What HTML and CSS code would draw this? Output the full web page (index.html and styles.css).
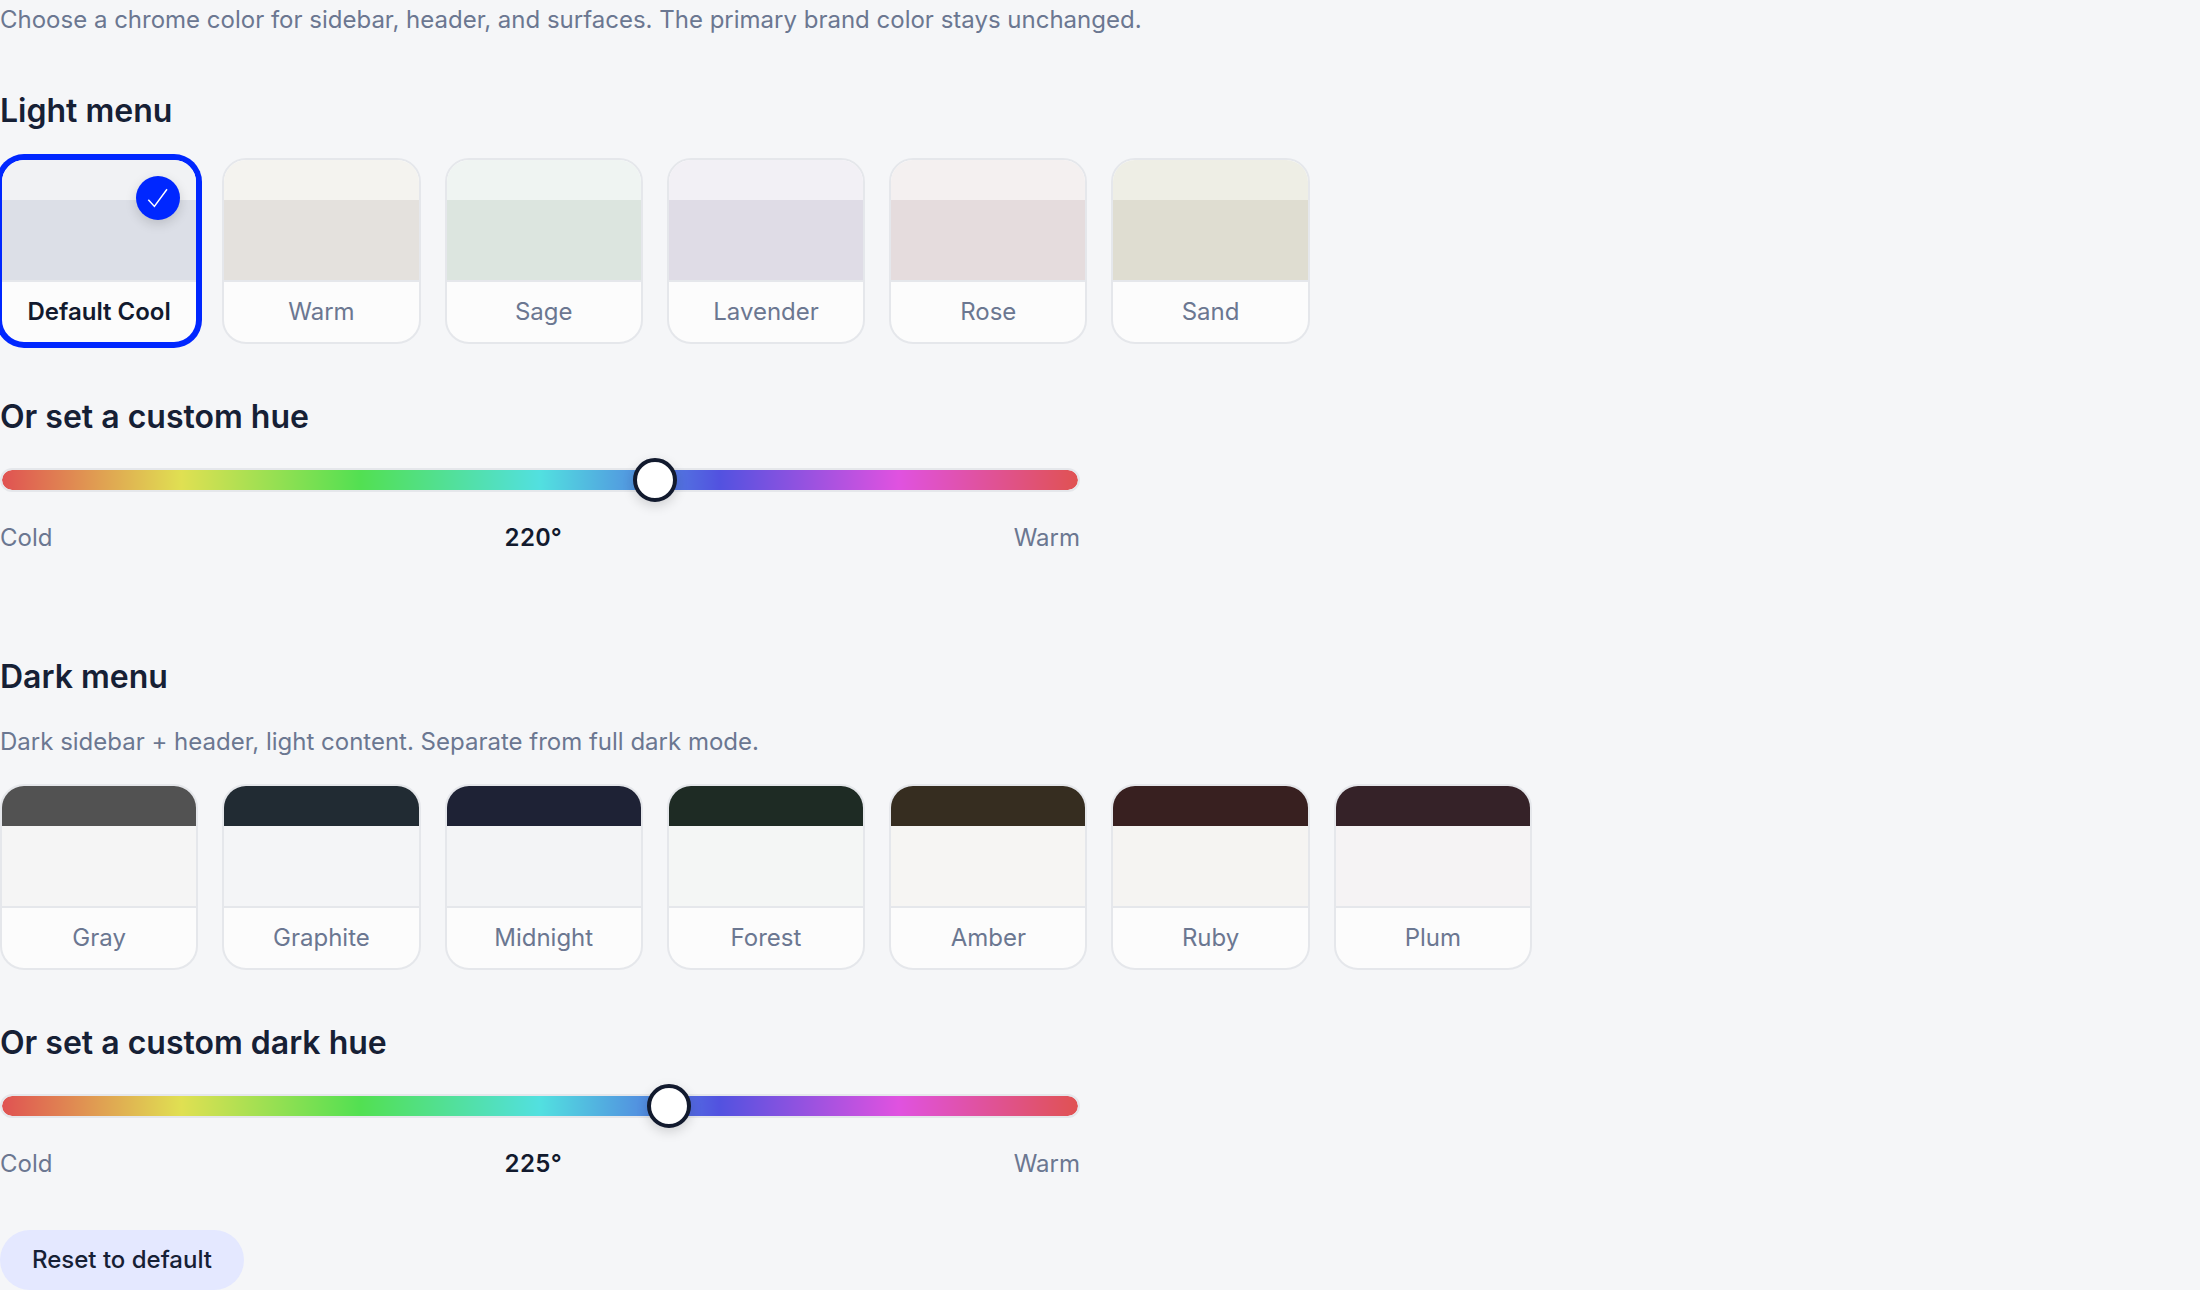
FILE: index.html
```html
<!DOCTYPE html>
<html lang="en">
<head>
    <meta charset="UTF-8">
    <meta name="viewport" content="width=device-width, initial-scale=1.0">
    <title>Chrome color</title>
    <link rel="stylesheet" href="styles.css">
</head>
<body>

    <form class="settings">
        <p class="hint">Choose a chrome color for sidebar, header, and surfaces. The primary brand color stays unchanged.</p>

        <!-- Light presets -->
        <h2>Light menu</h2>
        <div class="swatches">
            <label class="swatch cool">
                <input type="radio" name="chrome" value="cool" checked>
                <span class="swatch-header"></span>
                <span class="swatch-body"></span>
                <span class="swatch-name">Default Cool</span>
                <span class="check">
                    <svg viewBox="0 0 44 44" aria-hidden="true"><path d="M12.3 23.8 18.4 30.4 31 13.2"/></svg>
                </span>
            </label>
            <label class="swatch warm">
                <input type="radio" name="chrome" value="warm">
                <span class="swatch-header"></span>
                <span class="swatch-body"></span>
                <span class="swatch-name">Warm</span>
            </label>
            <label class="swatch sage">
                <input type="radio" name="chrome" value="sage">
                <span class="swatch-header"></span>
                <span class="swatch-body"></span>
                <span class="swatch-name">Sage</span>
            </label>
            <label class="swatch lavender">
                <input type="radio" name="chrome" value="lavender">
                <span class="swatch-header"></span>
                <span class="swatch-body"></span>
                <span class="swatch-name">Lavender</span>
            </label>
            <label class="swatch rose">
                <input type="radio" name="chrome" value="rose">
                <span class="swatch-header"></span>
                <span class="swatch-body"></span>
                <span class="swatch-name">Rose</span>
            </label>
            <label class="swatch sand">
                <input type="radio" name="chrome" value="sand">
                <span class="swatch-header"></span>
                <span class="swatch-body"></span>
                <span class="swatch-name">Sand</span>
            </label>
        </div>

        <h2><label for="lightHue">Or set a custom hue</label></h2>
        <div class="hue">
            <input type="range" id="lightHue" min="0" max="360" value="220" oninput="showHue(this, 'lightValue')">
            <div class="hue-scale">
                <span>Cold</span>
                <output id="lightValue" for="lightHue">220°</output>
                <span>Warm</span>
            </div>
        </div>

        <!-- Dark presets -->
        <div class="dark-section">
            <h2>Dark menu</h2>
            <p class="hint">Dark sidebar + header, light content. Separate from full dark mode.</p>
            <div class="swatches">
                <label class="swatch gray">
                    <input type="radio" name="chrome" value="gray">
                    <span class="swatch-header"></span>
                    <span class="swatch-body"></span>
                    <span class="swatch-name">Gray</span>
                </label>
                <label class="swatch graphite">
                    <input type="radio" name="chrome" value="graphite">
                    <span class="swatch-header"></span>
                    <span class="swatch-body"></span>
                    <span class="swatch-name">Graphite</span>
                </label>
                <label class="swatch midnight">
                    <input type="radio" name="chrome" value="midnight">
                    <span class="swatch-header"></span>
                    <span class="swatch-body"></span>
                    <span class="swatch-name">Midnight</span>
                </label>
                <label class="swatch forest">
                    <input type="radio" name="chrome" value="forest">
                    <span class="swatch-header"></span>
                    <span class="swatch-body"></span>
                    <span class="swatch-name">Forest</span>
                </label>
                <label class="swatch amber">
                    <input type="radio" name="chrome" value="amber">
                    <span class="swatch-header"></span>
                    <span class="swatch-body"></span>
                    <span class="swatch-name">Amber</span>
                </label>
                <label class="swatch ruby">
                    <input type="radio" name="chrome" value="ruby">
                    <span class="swatch-header"></span>
                    <span class="swatch-body"></span>
                    <span class="swatch-name">Ruby</span>
                </label>
                <label class="swatch plum">
                    <input type="radio" name="chrome" value="plum">
                    <span class="swatch-header"></span>
                    <span class="swatch-body"></span>
                    <span class="swatch-name">Plum</span>
                </label>
            </div>
        </div>

        <h2><label for="darkHue">Or set a custom dark hue</label></h2>
        <div class="hue">
            <input type="range" id="darkHue" min="0" max="360" value="225" oninput="showHue(this, 'darkValue')">
            <div class="hue-scale">
                <span>Cold</span>
                <output id="darkValue" for="darkHue">225°</output>
                <span>Warm</span>
            </div>
        </div>

        <button type="reset" class="reset">Reset to default</button>
    </form>

    <script>
        // Keep the degree readout in step with its slider
        function showHue(slider, outputId) {
            document.getElementById(outputId).textContent = slider.value + '°';
        }
    </script>

</body>
</html>
```
FILE: styles.css
```css
* {
    margin: 0;
    padding: 0;
    box-sizing: border-box;
}

body {
    font-family: Inter, 'Liberation Sans', sans-serif;
    font-size: 24px;
    line-height: 38px;
    color: #6b7791;
    background-color: #f5f6f8;
}

.settings {
    display: flex;
    flex-direction: column;
    padding-top: 1px;
}

h2 {
    margin-top: 52px;
    font-size: 32px;
    line-height: 40px;
    font-weight: 600;
    color: #162035;
}

/* Preset swatches */
.swatches {
    display: grid;
    grid-template-columns: repeat(7, 1fr);
    gap: 24px;
    max-width: 1532px;
    margin: 27px 0 1px;
}

.swatch {
    position: relative;
    display: flex;
    flex-direction: column;
    border: 2px solid #e5e7eb;
    border-radius: 24px;
    background-color: #fcfcfc;
    overflow: hidden;
    cursor: pointer;
}

.swatch input {
    position: absolute;
    opacity: 0;
}

.swatch-header {
    height: 40px;
}

.swatch-body {
    height: 80px;
}

.swatch-name {
    padding: 11px 8px;
    border-top: 2px solid #e5e7eb;
    text-align: center;
}

.swatch:has(input:checked) {
    border-color: #0027ff;
    box-shadow: 0 0 0 4px #0027ff;
}

.swatch:has(input:checked) .swatch-name {
    font-weight: 600;
    color: #121a2e;
}

.check {
    position: absolute;
    top: 16px;
    right: 16px;
    width: 44px;
    height: 44px;
    border-radius: 50%;
    background-color: #0027ff;
    box-shadow: 0 4px 12px rgba(0, 0, 0, 0.15);
}

.swatch input:not(:checked) ~ .check {
    display: none;
}

.check svg {
    display: block;
    fill: none;
    stroke: #fff;
    stroke-width: 1.5;
}

.cool .swatch-header { background-color: #f1f2f4; }
.cool .swatch-body { background-color: #dcdfe7; }
.warm .swatch-header { background-color: #f4f3ef; }
.warm .swatch-body { background-color: #e4e1dd; }
.sage .swatch-header { background-color: #eff4f2; }
.sage .swatch-body { background-color: #dce5df; }
.lavender .swatch-header { background-color: #f2f0f5; }
.lavender .swatch-body { background-color: #dfdce6; }
.rose .swatch-header { background-color: #f4f0f0; }
.rose .swatch-body { background-color: #e5dcdd; }
.sand .swatch-header { background-color: #eeeee5; }
.sand .swatch-body { background-color: #dfddd1; }

.gray .swatch-header { background-color: #525252; }
.gray .swatch-body { background-color: #f5f5f5; }
.graphite .swatch-header { background-color: #212b33; }
.graphite .swatch-body { background-color: #f4f5f7; }
.midnight .swatch-header { background-color: #1e2235; }
.midnight .swatch-body { background-color: #f3f4f6; }
.forest .swatch-header { background-color: #1e2b24; }
.forest .swatch-body { background-color: #f4f6f5; }
.amber .swatch-header { background-color: #362d20; }
.amber .swatch-body { background-color: #f6f5f3; }
.ruby .swatch-header { background-color: #382020; }
.ruby .swatch-body { background-color: #f5f4f2; }
.plum .swatch-header { background-color: #352228; }
.plum .swatch-body { background-color: #f5f3f4; }

/* Hue sliders */
.hue {
    max-width: 1080px;
    margin-top: 31px;
}

.hue input {
    appearance: none;
    display: block;
    width: 100%;
    height: 24px;
    border: 2px solid #e5e7eb;
    border-radius: 12px;
    background: linear-gradient(to right, #e05252, #e0e052, #52e052, #52e0e0, #5252e0, #e052e0, #e05252) padding-box;
    cursor: pointer;
}

.hue input::-webkit-slider-thumb {
    appearance: none;
    width: 44px;
    height: 44px;
    border: 4px solid #121a2e;
    border-radius: 50%;
    background-color: #fff;
    box-shadow: 0 4px 12px rgba(0, 0, 0, 0.15);
}

.hue-scale {
    display: flex;
    justify-content: space-between;
    margin-top: 27px;
}

.hue-scale output {
    font-weight: 600;
    font-variant-numeric: tabular-nums;
    color: #121a2e;
}

/* Dark menu */
.dark-section {
    margin-top: 48px;
}

.dark-section .hint {
    margin-top: 26px;
}

.dark-section .swatches {
    margin-top: 23px;
}

.reset {
    align-self: flex-start;
    margin-top: 47px;
    padding: 11px 32px;
    border: none;
    border-radius: 30px;
    background-color: #e4e8ff;
    font: inherit;
    font-weight: 500;
    color: #162035;
    cursor: pointer;
}
```
